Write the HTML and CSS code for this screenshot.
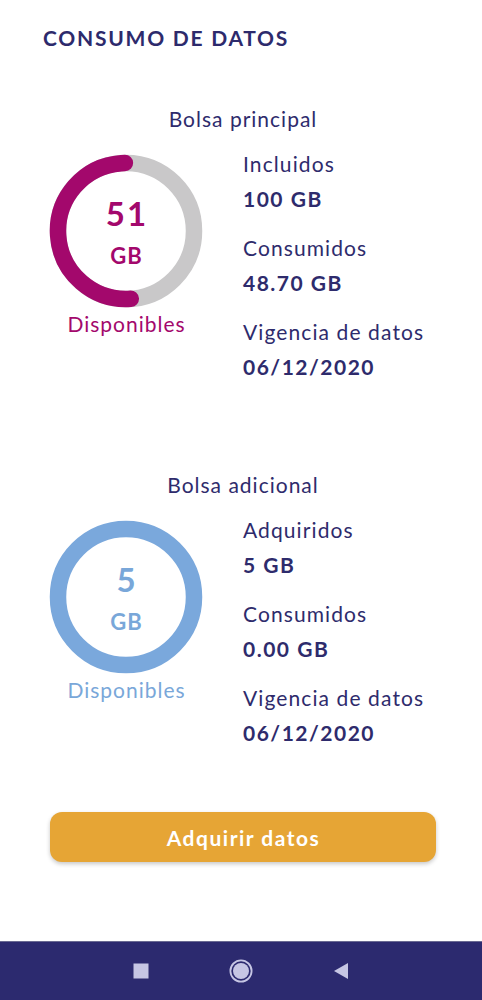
FILE: index.html
```html
<!DOCTYPE html>
<html lang="es">
<head>
<meta charset="utf-8">
<title>Consumo de datos</title>
<link rel="stylesheet" href="styles.css">
</head>
<body>
<div class="screen">
  <main class="main">
    <h1 class="title">CONSUMO DE DATOS</h1>

    <section class="bolsa bolsa-principal">
      <h2 class="bolsa-title">Bolsa principal</h2>
      <div class="bolsa-row">
        <div class="chart">
          <div class="donut">
            <svg class="donut-svg" width="160" height="160" viewBox="0 0 160 160">
              <circle cx="80" cy="80" r="68" fill="none" stroke="#c9c8c9" stroke-width="16.5"/>
              <circle cx="80" cy="80" r="68" fill="none" stroke="#a3086c" stroke-width="16.5" stroke-linecap="round" stroke-dasharray="217 500" transform="rotate(86 80 80)"/>
            </svg>
            <div class="donut-text magenta">
              <div class="donut-num">51</div>
              <div class="donut-unit">GB</div>
            </div>
          </div>
          <div class="chart-caption magenta">Disponibles</div>
        </div>
        <div class="details">
          <div class="item"><div class="label">Incluidos</div><div class="value">100 GB</div></div>
          <div class="item"><div class="label">Consumidos</div><div class="value">48.70 GB</div></div>
          <div class="item"><div class="label">Vigencia de datos</div><div class="value">06/12/2020</div></div>
        </div>
      </div>
    </section>

    <section class="bolsa bolsa-adicional">
      <h2 class="bolsa-title">Bolsa adicional</h2>
      <div class="bolsa-row">
        <div class="chart">
          <div class="donut">
            <svg class="donut-svg" width="160" height="160" viewBox="0 0 160 160">
              <circle cx="80" cy="80" r="68" fill="none" stroke="#7aa8dc" stroke-width="16.5"/>
            </svg>
            <div class="donut-text blue">
              <div class="donut-num">5</div>
              <div class="donut-unit">GB</div>
            </div>
          </div>
          <div class="chart-caption blue">Disponibles</div>
        </div>
        <div class="details">
          <div class="item"><div class="label">Adquiridos</div><div class="value">5 GB</div></div>
          <div class="item"><div class="label">Consumidos</div><div class="value">0.00 GB</div></div>
          <div class="item"><div class="label">Vigencia de datos</div><div class="value">06/12/2020</div></div>
        </div>
      </div>
    </section>

    <button class="cta" type="button">Adquirir datos</button>
  </main>

  <nav class="navbar">
    <span class="nav-btn">
      <svg width="16" height="16" viewBox="0 0 16 16"><rect x="0.5" y="0.5" width="15" height="15" fill="#c6c6e4"/></svg>
    </span>
    <span class="nav-btn">
      <svg width="24" height="24" viewBox="0 0 24 24"><circle cx="12" cy="12" r="10.6" fill="none" stroke="#c6c6e4" stroke-width="1.8"/><circle cx="12" cy="12" r="8" fill="#c6c6e4"/></svg>
    </span>
    <span class="nav-btn">
      <svg width="16" height="18" viewBox="0 0 16 18"><path d="M15 1 L15 17 L1 9 Z" fill="#c6c6e4"/></svg>
    </span>
  </nav>
</div>
</body>
</html>
```

FILE: styles.css
```css
* { box-sizing: border-box; }

html, body {
  margin: 0;
  padding: 0;
  background: #ffffff;
}

body {
  font-family: Lato, "Noto Sans", "Liberation Sans", sans-serif;
  color: #2e2b6c;
}

.screen {
  width: 482px;
  height: 1000px;
  display: flex;
  flex-direction: column;
  overflow: hidden;
}

.main {
  flex: 1;
  display: flex;
  flex-direction: column;
}

.title {
  margin: 0;
  padding: 26px 0 0 43px;
  font-size: 21px;
  line-height: 24px;
  font-weight: 700;
  color: #2d2a6c;
  letter-spacing: 1.75px;
}

.bolsa-title {
  margin: 0;
  font-size: 21px;
  line-height: 24px;
  font-weight: 400;
  text-align: center;
  padding-left: 4px;
  letter-spacing: 1px;
  color: #2e2b6c;
}

.bolsa-principal { margin-top: 57px; }
.bolsa-adicional { margin-top: 94px; }

.bolsa-row {
  display: flex;
  margin-top: 20px;
}

.chart {
  width: 160px;
  margin-left: 46px;
  display: flex;
  flex-direction: column;
  align-items: center;
}

.donut {
  display: grid;
  width: 160px;
  height: 160px;
}

.donut-svg,
.donut-text {
  grid-area: 1 / 1;
}

.donut-svg { display: block; }

.donut-text {
  padding-top: 44px;
  text-align: center;
  font-weight: 700;
}

.donut-num {
  font-size: 33px;
  line-height: 36px;
  letter-spacing: 2px;
  padding-left: 2px;
}

.donut-unit {
  font-size: 22px;
  line-height: 26px;
  margin-top: 12px;
  letter-spacing: 1px;
  padding-left: 1px;
}

.chart-caption {
  font-size: 21px;
  line-height: 24px;
  margin-top: 1px;
  letter-spacing: 1px;
  padding-left: 1px;
}

.magenta { color: #a3086c; }
.blue { color: #79a7d9; }

.details {
  margin-left: 37px;
  padding-top: 1px;
  display: flex;
  flex-direction: column;
  gap: 25px;
}

.label {
  font-size: 21px;
  line-height: 24px;
  font-weight: 400;
  letter-spacing: 1.1px;
}

.value {
  margin-top: 11px;
  font-size: 21px;
  line-height: 24px;
  font-weight: 700;
  letter-spacing: 1.5px;
}

.cta {
  margin: 67px 0 0 50px;
  width: 386px;
  height: 50px;
  border: none;
  border-radius: 12px;
  background: #e6a535;
  color: #ffffff;
  font-family: inherit;
  font-size: 21px;
  font-weight: 700;
  letter-spacing: 1.5px;
  box-shadow: 0 2px 4px rgba(0, 0, 0, 0.22);
  padding: 0 0 0 1px;
}

.navbar {
  height: 59px;
  background: #2c2a6f;
  border-top: 1px solid #6a6a92;
  display: flex;
  align-items: center;
  justify-content: center;
  gap: 0;
}

.nav-btn {
  width: 100px;
  display: flex;
  justify-content: center;
  align-items: center;
}
```
